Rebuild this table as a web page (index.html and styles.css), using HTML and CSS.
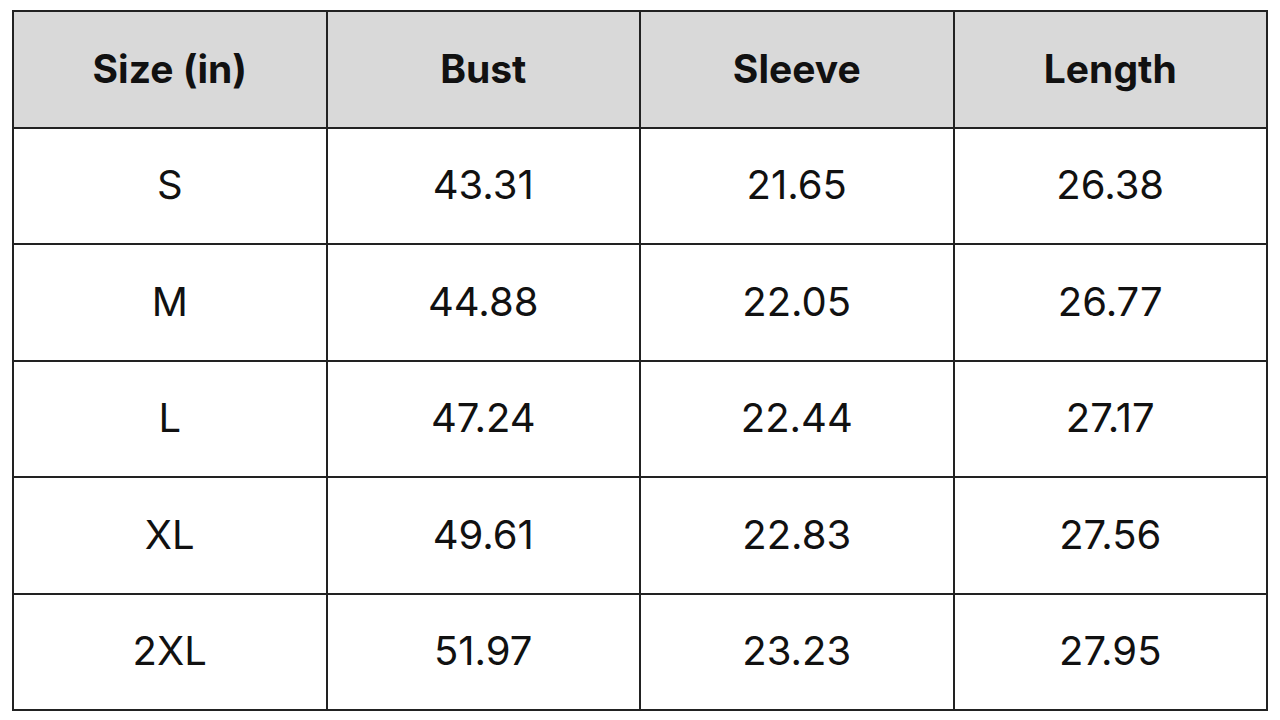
FILE: index.html
```html
<!DOCTYPE html>
<html>
<head>
<meta charset="utf-8">
<link rel="stylesheet" href="styles.css">
</head>
<body>
<table class="size-table">
  <thead>
    <tr><th>Size (in)</th><th>Bust</th><th>Sleeve</th><th>Length</th></tr>
  </thead>
  <tbody>
    <tr><td>S</td><td>43.31</td><td>21.65</td><td>26.38</td></tr>
    <tr><td>M</td><td>44.88</td><td>22.05</td><td>26.77</td></tr>
    <tr><td>L</td><td>47.24</td><td>22.44</td><td>27.17</td></tr>
    <tr><td>XL</td><td>49.61</td><td>22.83</td><td>27.56</td></tr>
    <tr><td>2XL</td><td>51.97</td><td>23.23</td><td>27.95</td></tr>
  </tbody>
</table>
</body>
</html>
```
FILE: styles.css
```css
html, body {
  margin: 0;
  padding: 0;
  background: #ffffff;
}
body {
  padding: 10px 12px 0 12px;
}
.size-table {
  width: 1256px;
  border-collapse: collapse;
  table-layout: fixed;
  font-family: Inter, "Liberation Sans", sans-serif;
  color: #111;
}
.size-table th,
.size-table td {
  border: 2px solid #222;
  text-align: center;
  vertical-align: middle;
  padding: 0 0 2px 0;
}
.size-table th {
  background: #d9d9d9;
  height: 112.5px;
  font-weight: 700;
  font-size: 39px;
}
.size-table td {
  height: 112.5px;
  font-size: 40px;
  font-weight: 400;
}
```
